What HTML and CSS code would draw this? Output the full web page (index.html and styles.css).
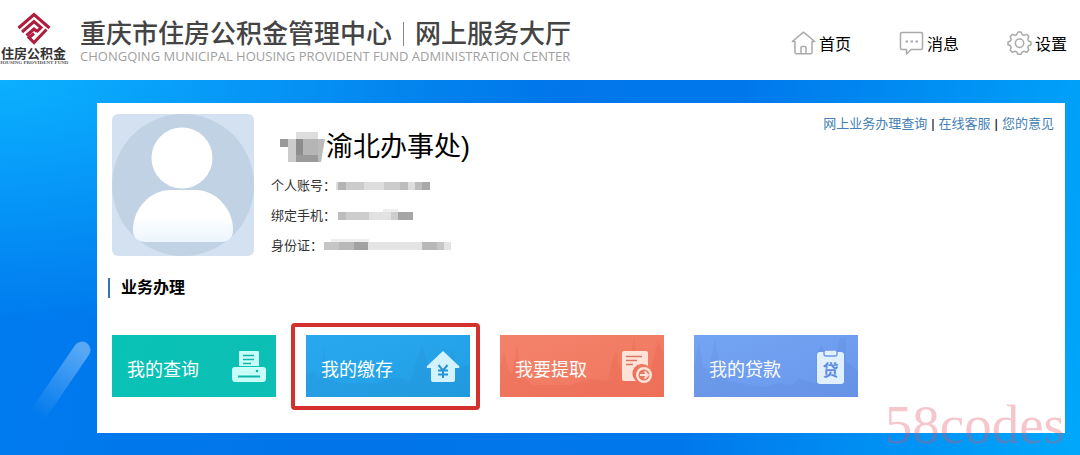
FILE: index.html
```html
<!doctype html>
<html lang="zh-CN">
  <head>
    <meta charset="UTF-8" />
    <meta name="viewport" content="width=device-width, initial-scale=1.0" />
    <title>重庆市住房公积金管理中心</title>
    <link rel="stylesheet" href="styles.css">
  </head>
  <body>
    <header class="header">
      <div class="logo">
        <svg width="34" height="34" viewBox="0 0 34 34" fill="none" stroke="#b01c3c" stroke-width="3">
          <path d="M1.5 16L17 2.5L32.5 16" />
          <path d="M5 20L17 9.5L24 15.5L19.5 20" />
          <path d="M9.5 23.5L17 17L20 19.5" />
          <path d="M29.5 17.5L17 30.5L12 25.5L17 21.5" />
        </svg>
        <span class="logo-name">住房公积金</span>
        <span class="logo-en">HOUSING PROVIDENT FUND</span>
      </div>
      <div class="title">
        <h1>重庆市住房公积金管理中心<i class="divider"></i>网上服务大厅</h1>
        <p>CHONGQING MUNICIPAL HOUSING PROVIDENT FUND ADMINISTRATION CENTER</p>
      </div>
      <nav class="nav">
        <a href="#">
          <svg width="25" height="24" viewBox="0 0 25 24" fill="none" stroke="#aaa" stroke-width="1.5" stroke-linejoin="round">
            <path d="M4 10.5H1.3L12.5 1.2L23.7 10.5H21V21.5Q21 22.8 19.7 22.8H5.3Q4 22.8 4 21.5Z" />
            <path d="M10 22.5V16.5Q10 15.5 11 15.5H14Q15 15.5 15 16.5V22.5" />
          </svg>
          首页
        </a>
        <a href="#">
          <svg width="25" height="24" viewBox="0 0 25 24" fill="none" stroke="#aaa" stroke-width="1.5" stroke-linejoin="round">
            <path d="M3 1.5H22Q23.5 1.5 23.5 3V17Q23.5 18.5 22 18.5H12L7.5 23V18.5H3Q1.5 18.5 1.5 17V3Q1.5 1.5 3 1.5Z" />
            <path d="M6.5 10.5H9M11.5 10.5H14M16.5 10.5H19" stroke-width="2" />
          </svg>
          消息
        </a>
        <a href="#">
          <svg width="25" height="24" viewBox="0 0 25 24" fill="none" stroke="#aaa" stroke-width="1.5" stroke-linejoin="round">
            <path d="M9.7 3.7L11 1H14L15.3 3.7L17 4.4L19.7 3.4L21.8 5.5L20.8 8.2L21.5 10L24 11V13.8L21.5 14.8L20.8 16.5L21.8 19L19.7 21.2L17 20.2L15.3 20.9L14 23.3H11L9.7 20.9L8 20.2L5.3 21.2L3.2 19L4.2 16.5L3.5 14.8L1 13.8V11L3.5 10L4.2 8.2L3.2 5.5L5.3 3.4L8 4.4Z" />
            <circle cx="12.5" cy="12.2" r="4.2" />
          </svg>
          设置
        </a>
      </nav>
    </header>

    <main class="main">
      <svg class="streak" width="66" height="90" viewBox="0 0 66 90">
        <defs>
          <linearGradient id="fade" gradientUnits="userSpaceOnUse" x1="53" y1="10" x2="10" y2="78">
            <stop offset="0" stop-color="#59a8f5" />
            <stop offset="1" stop-color="#59a8f5" stop-opacity="0" />
          </linearGradient>
        </defs>
        <path d="M52 11L9 74" stroke="url(#fade)" stroke-width="17" stroke-linecap="round" />
      </svg>

      <div class="panel">
        <section class="profile">
          <svg class="avatar" width="142" height="142" viewBox="0 0 142 142">
            <defs>
              <linearGradient id="body" x1="0" y1="0" x2="0" y2="1">
                <stop offset="0.5" stop-color="#fff" />
                <stop offset="1" stop-color="#ecf5fd" />
              </linearGradient>
            </defs>
            <rect width="142" height="142" fill="#d3e1f0" />
            <circle cx="71" cy="71" r="71" fill="#c2d2e5" />
            <circle cx="70" cy="44" r="30.5" fill="#fff" />
            <path d="M21 116C21 93 40 76 58 76H84C102 76 121 93 121 116Q121 128 108 128H34Q21 128 21 116Z" fill="url(#body)" />
          </svg>

          <div class="info">
            <h2>
              <svg width="46" height="31" viewBox="0 0 46 31">
                <path fill="#999" d="M0 7h8v8h-8z" />
                <path fill="#ccc" d="M8 7h8v23h-8z" />
                <path fill="#ddd" d="M16 0h22v7h-22z" />
                <path fill="#8d8d8d" d="M16 7h7v16h-7z" />
                <path fill="#b5b5b5" d="M23 7h15v16h-15z" />
                <path fill="#9a9a9a" d="M16 23h22v7h-22z" />
                <path fill="#bbb" d="M38 7h7l-4 23h-3z" />
              </svg>渝北办事处)
            </h2>
            <p>
              个人账号：
              <svg width="95" height="14" viewBox="0 0 95 14">
                <path fill="#ddd" d="M0 3h94v8h-94z" />
                <path fill="#b4b4b4" d="M2 3h8v8h-8z" />
                <path fill="#ccc" d="M10 3h18v8h-18zM48 3h16v8h-16z" />
                <path fill="#bdbdbd" d="M64 3h8v8h-8zM79 3h7v8h-7z" />
                <path fill="#a8a8a8" d="M86 3h8v8h-8z" />
              </svg>
            </p>
            <p>
              绑定手机：
              <svg width="78" height="14" viewBox="0 0 78 14">
                <path fill="#eee" d="M47 0h15v3h-15z" />
                <path fill="#e2e2e2" d="M2 3h75v8h-75z" />
                <path fill="#bcbcbc" d="M2 3h8v8h-8z" />
                <path fill="#cdcdcd" d="M10 3h23v8h-23zM55 3h7v8h-7z" />
                <path fill="#a5a5a5" d="M62 3h15v8h-15z" />
              </svg>
            </p>
            <p>
              身份证：
              <svg width="128" height="14" viewBox="0 0 128 14">
                <path fill="#eee" d="M8 0h38v3h-38z" />
                <path fill="#e4e4e4" d="M1 3h127v8h-127z" />
                <path fill="#c6c6c6" d="M1 3h15v8h-15zM114 3h7v8h-7z" />
                <path fill="#b8b8b8" d="M16 3h15v8h-15zM99 3h15v8h-15z" />
                <path fill="#a2a2a2" d="M31 3h14v8h-14z" />
              </svg>
            </p>
          </div>

          <div class="links">
            <a href="#">网上业务办理查询</a>
            <span>|</span>
            <a href="#">在线客服</a>
            <span>|</span>
            <a href="#">您的意见</a>
          </div>
        </section>

        <h3 class="section-title">业务办理</h3>

        <div class="tiles">
          <a href="#" class="tile query">
            我的查询
            <svg width="34" height="36" viewBox="0 0 34 36">
              <path fill="#c8fff8" d="M7 2Q7 1 8 1H26Q27 1 27 2V16H7Z" />
              <path stroke="#0fb5ac" stroke-width="1.6" d="M11 5.5H22M11 9.5H22M11 13.5H19" />
              <path fill="#c8fff8" d="M3 17H31Q34 17 34 20V28Q34 32 31 32H3Q0 32 0 28V20Q0 17 3 17Z" />
              <path stroke="#0fb5ac" stroke-width="2" d="M6 26.5H28" />
              <circle cx="25" cy="21" r="1.3" fill="#0fb5ac" />
            </svg>
          </a>
          <a href="#" class="tile deposit">
            <svg class="skyline" width="164" height="62" viewBox="0 0 164 62">
              <path d="M0 62V40L8 36L14 44L18 12L22 44L34 48H70L90 42L104 46L112 22L116 10L120 24L126 40L140 34L147 14L150 34L164 30V62Z" />
            </svg>
            我的缴存
            <svg width="34" height="36" viewBox="0 0 34 36">
              <path fill="#d3f2ff" d="M17 1L33 16Q34 18 32 18H29V30Q29 32 27 32H7Q5 32 5 30V18H2Q0 18 1 16Z" />
              <path fill="none" stroke="#2795d5" stroke-width="2" d="M12.5 15L17 20.5L21.5 15M17 20V28M12 20.5H22M12 24.5H22" />
            </svg>
          </a>
          <a href="#" class="tile withdraw">
            <svg class="skyline" width="164" height="62" viewBox="0 0 164 62">
              <path d="M0 62V34L4 16L8 34L12 40L17 10L21 38L32 50H70L90 44L108 46L112 26L116 16L120 34L128 38L134 2L138 34L150 38L158 6L164 20V62Z" />
            </svg>
            我要提取
            <svg width="34" height="36" viewBox="0 0 34 36">
              <path fill="#ffe3d8" d="M4 1H26Q28 1 28 3V16A9 9 0 0 0 16 31H4Q2 31 2 29V3Q2 1 4 1Z" />
              <path stroke="#d87763" stroke-width="1.6" d="M6 6.5H22M6 10.5H17M6 14.5H13" />
              <circle cx="24" cy="25" r="8" fill="#ffe3d8" />
              <circle cx="24" cy="25" r="5.5" fill="#e67a62" />
              <path fill="none" stroke="#ffe3d8" stroke-width="2" d="M20 25H27M24.5 21.5L28 25L24.5 28.5" />
            </svg>
          </a>
          <a href="#" class="tile loan">
            <svg class="skyline" width="164" height="62" viewBox="0 0 164 62">
              <path d="M0 62V32L5 6L9 32L15 34L21 4L26 32L34 46L70 52L84 48L98 50L104 44L122 48V18L128 10L134 26L142 22L146 2L152 4V26L164 36V62Z" />
            </svg>
            我的贷款
            <svg width="34" height="36" viewBox="0 0 34 36">
              <path fill="#e1f0ff" d="M6 2H27Q30 2 30 5V31Q30 34 27 34H6Q3 34 3 31V5Q3 2 6 2Z" />
              <path fill="#e1f0ff" stroke="#6d97e8" stroke-width="1.4" d="M10 2V4Q10 6 12 6H21Q23 6 23 4V2Q23 0 21 0H12Q10 0 10 2Z" />
              <text class="loan-mark" x="16.5" y="26" text-anchor="middle">贷</text>
            </svg>
          </a>
        </div>
      </div>

      <span class="watermark">58codes</span>
    </main>
  </body>
</html>
```
FILE: styles.css
```css
* {
  box-sizing: border-box;
}

body {
  margin: 0;
  min-height: 100vh;
  display: flex;
  flex-direction: column;
  font-family: "Liberation Sans", "Noto Sans CJK SC", sans-serif;
  color: #000;
  background-color: #fff;
}

h1,
h2,
h3,
p {
  margin: 0;
}

a {
  text-decoration: none;
}

.header {
  display: flex;
  height: 80px;
  padding-right: 13px;
}

.logo {
  width: 67px;
  padding-top: 12px;
  display: flex;
  flex-direction: column;
  align-items: center;
}

.logo-name {
  font-size: 13px;
  line-height: 15px;
  font-weight: bold;
  color: #333;
}

.logo-en {
  font-family: "Liberation Serif", serif;
  font-size: 5px;
  line-height: 4px;
  font-weight: bold;
  white-space: nowrap;
  color: #555;
}

.title {
  padding: 20px 0 0 13px;
  white-space: nowrap;
}

.title h1 {
  display: flex;
  align-items: center;
  font-size: 26px;
  line-height: 28px;
  font-weight: 500;
  color: #444;
}

.divider {
  width: 1px;
  height: 24px;
  margin: 0 11px;
  background-color: #888;
}

.title p {
  font-family: "Open Sans", sans-serif;
  font-size: 13px;
  line-height: 16px;
  color: #a0a0a0;
}

.nav {
  margin-left: auto;
  padding-top: 6px;
  display: flex;
  align-items: center;
  gap: 48px;
}

.nav a {
  display: flex;
  align-items: center;
  gap: 3px;
  font-size: 16px;
  color: #000;
}

.main {
  position: relative;
  flex: 1;
  padding: 23px 15px 22px 97px;
  background:
    radial-gradient(ellipse 560px 240px at 0 0, #0bb0ff, rgba(0, 140, 250, 0)),
    linear-gradient(100deg, #007cf0 0%, #0074e8 35%, #0078ec 65%, #00a8fb 100%);
}

.streak {
  position: absolute;
  left: 30px;
  bottom: 26px;
}

.panel {
  height: 100%;
  min-height: 330px;
  padding: 11px 11px 36px 15px;
  background-color: #fff;
}

.profile {
  display: flex;
}

.avatar {
  border-radius: 6px;
}

.info {
  padding: 15px 0 0 17px;
}

.info h2 {
  display: flex;
  align-items: center;
  padding-left: 9px;
  font-size: 27px;
  line-height: 36px;
  font-weight: normal;
  margin-bottom: 6px;
}

.info p {
  display: flex;
  align-items: center;
  font-size: 13px;
  line-height: 30px;
  color: #333;
}

.links {
  margin-left: auto;
  display: flex;
  align-items: flex-start;
  gap: 4px;
  font-size: 13px;
  line-height: 20px;
}

.links a {
  color: #4480b5;
}

.section-title {
  margin: 17px 0 0 -4px;
  padding-left: 11px;
  border-left: 2px solid #3476b5;
  font-size: 16px;
  line-height: 20px;
}

.tiles {
  display: flex;
  gap: 30px;
  margin-top: 37px;
}

.tile {
  position: relative;
  display: flex;
  align-items: center;
  justify-content: space-between;
  width: 164px;
  height: 62px;
  padding: 4px 10px 0 15px;
  font-size: 18px;
  color: #fff;
}

.tile svg {
  position: relative;
}

.tile .skyline {
  position: absolute;
  left: 0;
  top: 0;
  fill: rgba(30, 60, 140, 0.06);
}

.query {
  background: linear-gradient(100deg, #09c2b6, #0dbfb5);
}

.deposit {
  background: linear-gradient(160deg, #2aa8ef, #219fe5);
}

.withdraw {
  background: linear-gradient(160deg, #f3826a, #f0775e);
}

.withdraw .skyline {
  fill: rgba(220, 50, 40, 0.1);
}

.loan {
  background: linear-gradient(160deg, #74a4f3, #6a97ec);
}

/* red frame round the deposit tile */
.deposit::after {
  content: "";
  position: absolute;
  inset: -12px -10px -13px -15px;
  border: 4px solid #d4302e;
  border-radius: 4px;
}

.loan-mark {
  font-size: 16px;
  font-weight: bold;
  fill: #5e8ce0;
}

.watermark {
  position: absolute;
  right: 15px;
  bottom: 0;
  font-family: "Liberation Serif", serif;
  font-size: 55px;
  line-height: 60px;
  color: rgba(225, 80, 95, 0.32);
}
```
